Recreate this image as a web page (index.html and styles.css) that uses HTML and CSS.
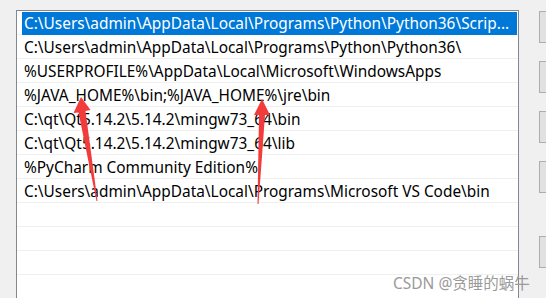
FILE: index.html
```html
<!DOCTYPE html>
<html lang="en">
<head>
  <meta charset="UTF-8">
  <title>Edit environment variable</title>
  <link rel="stylesheet" href="styles.css">
</head>
<body>
  <div class="dialog">
    <div class="list">
      <div class="row selected"><span class="cell">C:\Users\admin\AppData\Local\Programs\Python\Python36\Scrip...</span></div>
      <div class="row"><span class="cell">C:\Users\admin\AppData\Local\Programs\Python\Python36\</span></div>
      <div class="row"><span class="cell">%USERPROFILE%\AppData\Local\Microsoft\WindowsApps</span></div>
      <div class="row"><span class="cell">%JAVA_HOME%\bin;%JAVA_HOME%\jre\bin</span></div>
      <div class="row"><span class="cell">C:\qt\Qt5.14.2\5.14.2\mingw73_64\bin</span></div>
      <div class="row"><span class="cell">C:\qt\Qt5.14.2\5.14.2\mingw73_64\lib</span></div>
      <div class="row"><span class="cell">%PyCharm Community Edition%</span></div>
      <div class="row"><span class="cell">C:\Users\admin\AppData\Local\Programs\Microsoft VS Code\bin</span></div>
      <div class="row"><span class="cell"></span></div>
      <div class="row"><span class="cell"></span></div>
      <div class="row"><span class="cell"></span></div>
      <div class="row"><span class="cell"></span></div>
    </div>
    <div class="buttons">
      <div class="btn"></div>
      <div class="btn"></div>
      <div class="btn"></div>
      <div class="btn"></div>
      <div class="btn gap"></div>
    </div>
  </div>

  <!-- annotation arrows drawn over the list -->
  <svg class="arrows" width="546" height="298" viewBox="0 0 546 298">
    <polygon points="81,97 73.5,113 78.5,112.5 96.5,201 97.5,201 85.5,111 90.5,110" fill="#f23b3b"/>
    <polygon points="262,99 254,115 259,115 257.5,204 258.5,204 265,115 270,115" fill="#f23b3b"/>
  </svg>

  <div class="watermark">CSDN @贪睡的蜗牛</div>
</body>
</html>
```

FILE: styles.css
```css
body {
  margin: 0;
  width: 546px;
  height: 298px;
  overflow: hidden;
  background: #f0f0f0;
  font-family: 'Noto Sans', 'Noto Sans CJK SC', sans-serif;
  position: relative;
}
.dialog {
  display: flex;
  align-items: flex-start;
  padding: 10px 0 0 16px;
}
.list {
  width: 501px;
  height: 287px;
  overflow: hidden;
  background: #ffffff;
  border: 1px solid #828790;
  border-bottom: none;
  flex-shrink: 0;
}
.row {
  height: 24px;
  box-sizing: border-box;
  border-bottom: 1px solid #f0f0f0;
  padding: 1px 1px 0 5px;
}
.cell {
  display: block;
  height: 23px;
  line-height: 23px;
  padding-left: 2px;
  font-size: 15.4px;
  color: #000000;
  white-space: nowrap;
  overflow: hidden;
}
.selected .cell {
  background: #0078d7;
  color: #ffffff;
}
.buttons {
  display: flex;
  flex-direction: column;
  gap: 18px;
  margin-left: 20px;
  padding-top: 1px;
}
.btn {
  width: 30px;
  height: 32px;
  box-sizing: border-box;
  background: #e1e1e1;
  border: 1px solid #adadad;
}
.btn.gap {
  margin-top: 25px;
}
.arrows {
  position: absolute;
  left: 0;
  top: 0;
}
.watermark {
  position: absolute;
  left: 393px;
  top: 271px;
  font-size: 15.5px;
  color: #9a9a9a;
  white-space: nowrap;
}
```
